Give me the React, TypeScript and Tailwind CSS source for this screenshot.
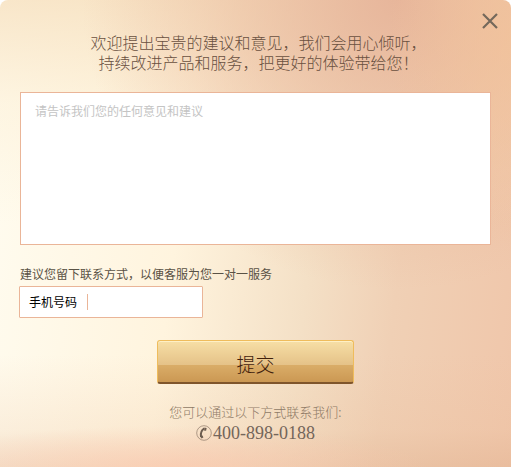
import { useState } from "react";

function CloseIcon() {
  return (
    <svg viewBox="0 0 16 16" className="size-4" fill="none" stroke="#74685b" strokeWidth="2.2" aria-hidden="true">
      <path d="M1 1L15 15M15 1L1 15" />
    </svg>
  );
}

function PhoneIcon() {
  return (
    <svg viewBox="0 0 16 16" className="size-4" fill="none" aria-hidden="true">
      <circle cx="8" cy="8" r="7.3" stroke="#9a8775" strokeWidth="0.8" />
      <path d="M8.4 3.4C5.8 5 4.4 8.6 5 12" stroke="#6d5d50" strokeWidth="2" />
      <path d="M8.4 2.6L10.6 2.9L10.2 5.6L8.4 6.1Z" fill="#6d5d50" />
      <path d="M4.4 11L6.6 10.4L7.4 12.6L5.4 13.6Z" fill="#6d5d50" />
    </svg>
  );
}

export default function App() {
  const [message, setMessage] = useState("");
  const [phone, setPhone] = useState("");

  return (
    <main className="relative overflow-hidden rounded-t-lg bg-[radial-gradient(ellipse_50%_9%_at_34%_100%,#fdc9b0a0,#fdc9b000),linear-gradient(to_top,#dfae8a60,#e9bd9a30_8%,#e9bd9a00_24%),radial-gradient(ellipse_24%_45%_at_100%_8%,#f2c29ac0,#f2c29a00),radial-gradient(ellipse_62%_62%_at_78%_0%,#e5b096e0,#e8b59880_50%,#edc3a000),linear-gradient(to_bottom,#f6dfbdc0,#fbeacb60_22%,#fff8e800_48%),linear-gradient(97deg,#fffcf0,#fff4de_36%,#f4e0c6_60%,#f0d0b5_76%,#f0c6aa)] px-5 pt-8 pb-[23px] font-['Noto_Sans_CJK_SC',sans-serif]">
      <button type="button" aria-label="关闭" className="absolute top-3 right-3 flex size-4.5 cursor-pointer items-center justify-center">
        <CloseIcon />
      </button>

      <form onSubmit={(event) => event.preventDefault()}>
        <h1 className="pl-1.5 text-center text-base leading-5 font-light text-[#69503f]">
          欢迎提出宝贵的建议和意见，我们会用心倾听，
          <br />
          持续改进产品和服务，把更好的体验带给您！
        </h1>

        <textarea
          aria-label="意见和建议"
          placeholder="请告诉我们您的任何意见和建议"
          value={message}
          onChange={(event) => setMessage(event.target.value)}
          className="mt-5 block h-[153px] w-full resize-none border border-[#eab598] bg-white px-3.5 py-2 text-xs leading-5 text-[#444] outline-none placeholder:text-[#c4c4c4]"
        />

        <p className="mt-[19px] text-xs leading-5 text-[#5a5245]">建议您留下联系方式，以便客服为您一对一服务</p>

        <div className="mt-0.5 -ml-px flex h-8 w-46 items-center rounded-[1px] border border-[#eab598] bg-white pl-[9px]">
          <label htmlFor="phone" className="pr-2.5 text-xs leading-5 text-black">
            手机号码
          </label>
          <input
            id="phone"
            type="tel"
            value={phone}
            onChange={(event) => setPhone(event.target.value)}
            className="h-4 min-w-0 flex-1 border-l border-[#eab598] px-2 text-xs text-black outline-none"
          />
        </div>

        <button
          type="submit"
          className="mx-auto mt-[22px] block h-11 w-[197px] cursor-pointer rounded-[3px] border border-b-2 border-[#efbc5c] border-b-[#7f552b] bg-[linear-gradient(to_bottom,#f7dfa6,#e5c288_58%,#daad68_58%,#cb9853)] pt-1 text-[19px] leading-7 font-light text-[#40200c] shadow-[inset_0_1px_0_#fff0c5]"
        >
          提交
        </button>
      </form>

      <footer className="mt-[18px] flex flex-col items-center">
        <p className="text-[13px] leading-5 font-light text-[#8f7a66]">您可以通过以下方式联系我们:</p>
        <a
          href="tel:400-898-0188"
          className="flex items-center font-['Liberation_Serif',serif] text-lg leading-[22px] text-[#74655a]"
        >
          <PhoneIcon />
          <span className="pl-px">400-898-0188</span>
        </a>
      </footer>
    </main>
  );
}
